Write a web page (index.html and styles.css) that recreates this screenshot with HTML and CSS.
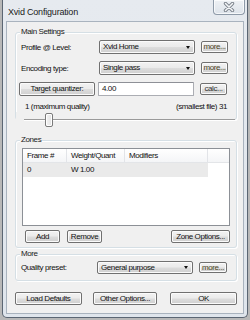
FILE: index.html
```html
<!DOCTYPE html>
<html>
<head>
<meta charset="utf-8">
<link rel="stylesheet" href="styles.css">
</head>
<body>
<div class="window">
  <div class="titlebar">
    <span class="title">Xvid Configuration</span>
    <div class="close">
      <svg width="12" height="10" viewBox="0 0 12 10">
        <path d="M2.5 1.5 L9.5 8.5 M9.5 1.5 L2.5 8.5" stroke="#7d848d" stroke-width="3.4" stroke-linecap="round"/>
        <path d="M2.5 1.5 L9.5 8.5 M9.5 1.5 L2.5 8.5" stroke="#f4f6f8" stroke-width="1.5" stroke-linecap="round"/>
      </svg>
    </div>
  </div>
  <div class="client">
    <div class="group main">
      <div class="legend">Main Settings</div>
      <div class="row r1">
        <span class="lbl">Profile @ Level:</span>
        <div class="combo"><span>Xvid Home</span><i class="arrow"></i></div>
        <button class="btn small">more...</button>
      </div>
      <div class="row r2">
        <span class="lbl">Encoding type:</span>
        <div class="combo"><span>Single pass</span><i class="arrow"></i></div>
        <button class="btn small">more...</button>
      </div>
      <div class="row r3">
        <button class="btn tq">Target quantizer:</button>
        <div class="input">4.00</div>
        <button class="btn small calc">calc...</button>
      </div>
      <div class="scale"><span>1 (maximum quality)</span><span>(smallest file) 31</span></div>
      <div class="slider"><div class="thumb"></div></div>
    </div>

    <div class="group zones">
      <div class="legend">Zones</div>
      <div class="list">
        <div class="lhead">
          <div class="c1">Frame #</div>
          <div class="c2">Weight/Quant</div>
          <div class="c3">Modifiers</div>
          <div class="c4"></div>
        </div>
        <div class="lrow">
          <div class="c1">0</div>
          <div class="c2">W 1.00</div>
          <div class="c3"></div>
        </div>
      </div>
      <div class="zbtns">
        <button class="btn add">Add</button>
        <button class="btn remove">Remove</button>
        <button class="btn zopt">Zone Options...</button>
      </div>
    </div>

    <div class="group more">
      <div class="legend">More</div>
      <div class="row r4">
        <span class="lbl lbl2">Quality preset:</span>
        <div class="combo"><span>General purpose</span><i class="arrow"></i></div>
        <button class="btn small more2">more...</button>
      </div>
    </div>

    <div class="footer">
      <button class="btn load">Load Defaults</button>
      <button class="btn other">Other Options...</button>
      <button class="btn ok">OK</button>
    </div>
  </div>
</div>
</body>
</html>
```

FILE: styles.css
```css
* { box-sizing: border-box; }
html, body { margin: 0; padding: 0; }
body {
  width: 250px;
  height: 320px;
  background: #b8b8b8;
  font-family: "Liberation Sans", Arial, sans-serif;
  font-size: 8px;
  letter-spacing: -0.4px;
  color: #111;
  overflow: hidden;
}
.window {
  margin-left: 2px;
  width: 246px;
  height: 318px;
  background: linear-gradient(#e6eaef, #dfe5ec);
  border: 1px solid #5b6673;
  border-top: none;
  border-radius: 0 0 5px 5px;
  padding: 0 3px 3px 3px;
}
.titlebar {
  height: 21px;
  display: flex;
  align-items: flex-start;
  justify-content: space-between;
}
.title {
  font-size: 9px;
  letter-spacing: -0.2px;
  color: #1a1a1a;
  line-height: 10px;
  margin-top: 7px;
  margin-left: 2px;
}
.close {
  width: 32px;
  height: 15px;
  margin-right: -1px;
  border: 1px solid #8e9aa8;
  border-top: none;
  border-radius: 0 0 4px 4px;
  background: linear-gradient(#eef1f4, #dde3ea);
  box-shadow: inset 0 0 0 1px rgba(255,255,255,0.7);
  display: flex;
  align-items: center;
  justify-content: center;
}
.client {
  height: 293px;
  background: #f0f0f0;
  border: 1px solid #a9b3be;
  padding: 0 6px 0 8px;
  display: flex;
  flex-direction: column;
}
.group {
  border: 1px solid #d5dfe5;
  border-radius: 3px;
  box-shadow: inset 1px 1px 0 #fff, 1px 1px 0 #fff;
}
.legend {
  width: max-content;
  height: 9px;
  line-height: 9px;
  margin: -6px 0 0 4px;
  padding: 0 1px;
  background: #f0f0f0;
  color: #1a1a1a;
}
.main { margin-top: 10px; }
.zones { margin-top: 20px; padding-bottom: 4px; }
.more { margin-top: 6px; padding-bottom: 6px; }

.row {
  display: flex;
  align-items: center;
  height: 14px;
  padding-left: 5px;
}
.r1 { margin-top: 4px; }
.r2 { margin-top: 7px; }
.r3 { margin-top: 7px; padding-left: 3px; }
.r4 { margin-top: 3px; height: 13px; }
.lbl { width: 78px; }
.lbl2 { width: 76px; }

.btn {
  font-family: inherit;
  font-size: 8px;
  letter-spacing: -0.4px;
  color: #111;
  margin: 0;
  padding: 0;
  height: 13px;
  line-height: 11px;
  border: 1px solid #707070;
  border-radius: 2px;
  background: linear-gradient(#f2f2f2 0%, #ebebeb 48%, #dddddd 52%, #cfcfcf 100%);
  box-shadow: inset 0 0 0 1px #fbfbfb;
  text-align: center;
}
.combo {
  width: 96px;
  height: 14px;
  border: 1px solid #707070;
  border-radius: 2px;
  background: linear-gradient(#f2f2f2 0%, #ebebeb 48%, #dddddd 52%, #cfcfcf 100%);
  box-shadow: inset 0 0 0 1px #fbfbfb;
  display: flex;
  align-items: center;
  justify-content: space-between;
  padding: 0 3px 0 3px;
  line-height: 12px;
}
.r4 .combo { height: 13px; }
.arrow {
  width: 0;
  height: 0;
  border-left: 2.5px solid transparent;
  border-right: 2.5px solid transparent;
  border-top: 3px solid #111;
  margin-right: 1px;
}
.small {
  width: 27px;
  height: 12px;
  line-height: 10px;
  margin-left: 6px;
  color: #4b4322;
}
.calc { color: #333; height: 12px; }
.more2 { width: 28px; height: 11px; line-height: 9px; }
.tq { width: 76px; height: 14px; line-height: 12px; }
.input {
  width: 96px;
  height: 14px;
  margin-left: 3px;
  background: #fff;
  border: 1px solid #abadb3;
  border-top-color: #8e9097;
  border-radius: 1px;
  padding-left: 3px;
  line-height: 12px;
}
.scale {
  display: flex;
  justify-content: space-between;
  height: 10px;
  line-height: 10px;
  margin-top: 6px;
  padding: 0 9px 0 9px;
}
.slider {
  height: 15px;
  margin: 0 1px -8px 0;
  padding-top: 1px;
  padding-left: 29px;
  background:
    linear-gradient(#9a9a9a, #9a9a9a) 8px 7px / calc(100% - 8px) 1px no-repeat,
    linear-gradient(#ffffff, #ffffff) 8px 8px / calc(100% - 8px) 1px no-repeat,
    #f0f0f0;
}
.thumb {
  width: 8px;
  height: 14px;
  border: 1px solid #7a7a7a;
  border-radius: 2px;
  background: linear-gradient(90deg, #f4f4f4, #e2e2e2);
  box-shadow: inset 0 0 0 1px #fff;
}

.list {
  margin: 4px 0 0 6px;
  width: 208px;
  height: 78px;
  background: #fff;
  border: 1px solid #8c9096;
}
.lhead {
  display: flex;
  height: 14px;
  line-height: 13px;
  border-bottom: 1px solid #e3e5e8;
  background: linear-gradient(#ffffff, #f4f5f7);
}
.lhead > div { border-right: 1px solid #e2e4e8; padding-left: 4px; }
.lhead .c4 { flex: 1; border-right: none; }
.c1 { width: 44px; }
.c2 { width: 58px; }
.c3 { width: 83px; }
.lrow {
  display: flex;
  height: 14px;
  line-height: 13px;
  background: #eaeaea;
  width: max-content;
}
.lrow > div { padding-left: 4px; }

.zbtns {
  display: flex;
  margin-top: 4px;
  padding: 0 6px 0 9px;
}
.add { width: 35px; }
.remove { width: 35px; margin-left: 7px; }
.zopt { width: 59px; margin-left: auto; }

.footer {
  display: flex;
  margin-top: 11px;
}
.load { width: 67px; }
.other { width: 65px; margin-left: 11px; }
.ok { width: 67px; margin-left: 13px; }
```
